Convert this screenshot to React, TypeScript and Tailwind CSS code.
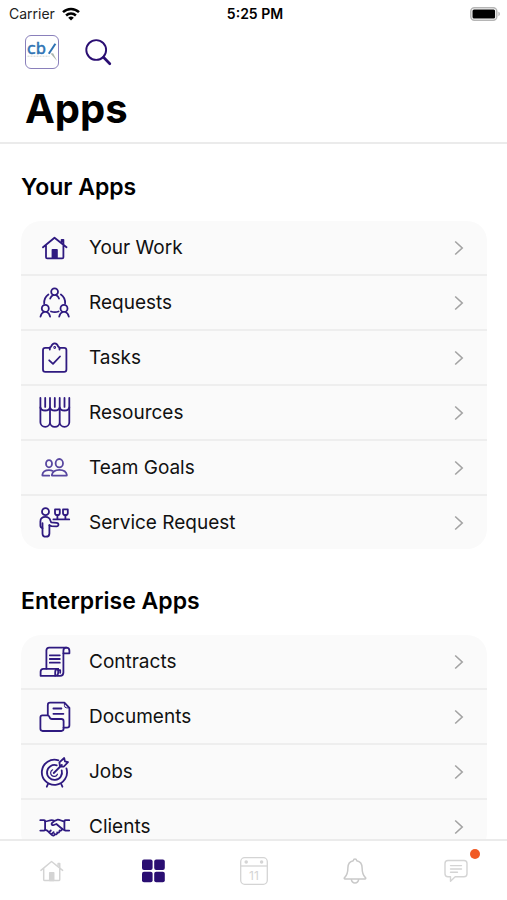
import type { ReactNode } from 'react';

interface AppItem {
  name: string;
  icon: ReactNode;
}

interface IconProps {
  children: ReactNode;
  className?: string;
}

function LineIcon({ children, className = 'text-[#2f1a80]' }: IconProps) {
  return (
    <svg
      viewBox="0 0 32 32"
      className={`w-8 h-8 shrink-0 ${className}`}
      fill="none"
      stroke="currentColor"
      strokeWidth="1.8"
      strokeLinecap="round"
      strokeLinejoin="round"
      aria-hidden="true"
    >
      {children}
    </svg>
  );
}

const HouseShape = () => (
  <>
    <path d="M4 15.3 15.5 5.7l12 9.6M7 13.2v12q0 1.2 1.2 1.2h15q1.2 0 1.2-1.2v-12" />
    <path d="M22.6 10V7.8h1.8v4.5" />
    <path d="M13.5 17.8h4.4v8.4h-4.4z" fill="currentColor" />
  </>
);

const yourApps: AppItem[] = [
  {
    name: 'Your Work',
    icon: (
      <LineIcon>
        <HouseShape />
      </LineIcon>
    ),
  },
  {
    name: 'Requests',
    icon: (
      <LineIcon>
        <circle cx="15.6" cy="4.7" r="3.4" />
        <path d="M11.2 11.6c.6-1.9 1.7-3.1 3-3.5M20 11.6c-.6-1.9-1.7-3.1-3-3.5" />
        <circle cx="6.3" cy="21.4" r="3.5" />
        <path d="M1.5 29.6c.6-2.4 1.8-4 3.5-4.6M11.1 29.6c-.6-2.4-1.8-4-3.5-4.6" />
        <circle cx="25" cy="21.4" r="3.5" />
        <path d="M20.2 29.6c.6-2.4 1.8-4 3.5-4.6M29.8 29.6c-.6-2.4-1.8-4-3.5-4.6" />
        <path d="M9.4 7.4c-3 2.1-4.4 5.3-4.2 9M21.9 7.4c3 2.1 4.4 5.3 4.2 9M12 24.5c2.6.9 5 .9 7.6 0" />
      </LineIcon>
    ),
  },
  {
    name: 'Tasks',
    icon: (
      <LineIcon>
        <path d="M10.8 5.8H6.3Q4 5.8 4 8v19.5q0 2.4 2.3 2.4h18.8q2.3 0 2.3-2.4V8q0-2.2-2.3-2.2h-4.6" />
        <path d="M10.8 7.6V6q0-1.2 1.2-1.2C12.8 2.6 14 1.4 15.7 1.4s2.9 1.2 3.6 3.4q1.2 0 1.2 1.2v1.6" />
        <circle cx="15.7" cy="5.5" r=".5" />
        <path d="m10.2 18.3 3.8 3.5 7-7.3" />
      </LineIcon>
    ),
  },
  {
    name: 'Resources',
    icon: (
      <LineIcon>
        <path d="M1.4.9v24.3a4.8 4.6 0 0 0 9.6 0V.9M11 25.2a4.8 4.6 0 0 0 9.7 0V.9M20.7 25.2a4.8 4.6 0 0 0 9.6 0V.9" />
        <path d="M6.2.9v9M15.8.9v9M25.5.9v9" />
        <path d="M1.4 10.5c.4 2.1 2 3 4.8 3s4.4-.9 4.8-3c.4 2.1 2 3 4.8 3s4.4-.9 4.9-3c.4 2.1 2 3 4.8 3s4.4-.9 4.8-3" />
      </LineIcon>
    ),
  },
  {
    name: 'Team Goals',
    icon: (
      <LineIcon className="text-[#5847a0]">
        <ellipse cx="10" cy="11.7" rx="3" ry="3.6" />
        <ellipse cx="20.3" cy="11.2" rx="3.7" ry="4.2" />
        <path d="M12.8 23.2q0 .5.5.5h14q.6 0 .6-.6c-.5-3.4-3.7-5.3-7.5-5.3s-7 2-7.6 5.4z" />
        <path d="M10.2 23.7H3.9q-.6 0-.6-.6c.4-3.3 3.2-5 6.7-5 1.4 0 2.7.2 3.7.8" />
      </LineIcon>
    ),
  },
  {
    name: 'Service Request',
    icon: (
      <LineIcon>
        <circle cx="6.5" cy="4.7" r="3.5" />
        <path d="M3.5 21.2c-1.6-.4-2.1-1.2-2.1-2.6v-4.2c0-2.8 1.9-4.6 5.1-4.6 2.8 0 4.3 1.5 5 3.9l.6 1.6 5.4.6c2.7.3 2.5 3.5 0 3.4l-5.1-.2-2-.8" />
        <path d="M3.5 16.2v10.2c0 4.4 6.9 4.4 6.9 0v-8.3" />
        <path d="M14.4 12.4h15.8" />
        <path d="M16 2.4h4.8V6q0 2.2-2.4 2.2T16 6zM18.4 8v4M24 2.4h4.8V6q0 2.2-2.4 2.2T24 6zM26.4 8v4" />
      </LineIcon>
    ),
  },
];

const enterpriseApps: AppItem[] = [
  {
    name: 'Contracts',
    icon: (
      <LineIcon>
        <path d="M7.4 22.7V4.5q0-2.8 2.8-2.8h17.1q3.1 0 3.1 3.1v2.5h-6" />
        <path d="M27.3 1.7q-2.9 0-2.9 3v21.8q0 3.3-3.3 3.3H18" />
        <path d="M4.4 22.9h14.8v3.4q.1 3.5-2.9 3.5H1.6v-4q0-2.9 2.8-2.9z" />
        <path d="M19.2 22.9q-3 0-3 3v3.8M19.2 24.2h2v2.6" />
        <path d="M10.8 9.3h10M10.8 13h10M10.8 16.7h10" />
      </LineIcon>
    ),
  },
  {
    name: 'Documents',
    icon: (
      <LineIcon>
        <path d="M8.8 14.2V4q0-2.3 2.3-2.3h14.3l5 5.2v17.4q0 2.4-2.4 2.4h-3.5" />
        <path d="M25.4 1.7v2.8q0 2.4 2.4 2.4h2.5" strokeWidth="1" />
        <path d="M3.4 14.3h4.8q1.7 0 2.2 1.5.6 2.2 2.6 2.2h9.3q2.3 0 2.3 2.3v7.3q0 2.4-2.3 2.4H3.7q-2.3 0-2.3-2.4V16.5q0-2.2 2-2.2z" />
        <path d="M14.4 7.5h8M14.4 12.8h10" />
      </LineIcon>
    ),
  },
  {
    name: 'Jobs',
    icon: (
      <LineIcon>
        <path d="M19.4 4.3a12.6 12.6 0 1 0 8 8" />
        <path d="M17.8 9.3a7.5 7.5 0 1 0 4.9 5" />
        <path d="m14.8 17 8-8M21 10.7l-.6-4.4L25.2 2l.7 3.4 3.1.7-4.1 4.4z" />
        <path d="M13.6 13.8a3.5 3.5 0 1 0 4.8 4.4" strokeWidth="1.2" />
        <path d="m9 28-1.2 2.7M22.2 28l1.2 2.7" />
      </LineIcon>
    ),
  },
  {
    name: 'Clients',
    icon: (
      <LineIcon>
        <path d="M1.3 9.2h3.8q1 0 1 1v8.4q0 1-1 1H1.3M30.2 9.2h-3.8q-1 0-1 1v8.4q0 1 1 1h3.8" />
        <path d="M6.1 10.4c3 .2 4.7-1.9 7.8-1.1l1.6.5M25.4 10.4c-2.8.1-4.6-2.3-7.4-1.6-1.9.4-3.5 1.6-5.1 3.4-1 1.2.4 2.3 1.9 1.8l2.6-1 6.2 5.2c.7.6 1 .7 1.8.6" />
        <path d="M6.1 18.8c2 0 2.8 1.3 4.2 2.8l2.7 2.5c1.4 1.1 2.7.3 2.6-1.1 1.4 1 2.9 0 2.6-1.5 1.5.5 2.7-.5 2.3-2 1.5.3 2.7-.5 2.5-1.8M10 21.3l1.8-1.8M12.7 23.2l2-2" />
      </LineIcon>
    ),
  },
];

function AppSection({ title, items }: { title: string; items: AppItem[] }) {
  return (
    <section>
      <h2 className="text-[23px] leading-7 font-semibold text-black mb-5">{title}</h2>
      <ul className="rounded-[20px] bg-[#fafafa] overflow-hidden divide-y-2 divide-[#eeeeee]">
        {items.map((item) => (
          <li key={item.name}>
            <a href="#" className="flex items-center h-[53px] pl-[18px] pr-[23px]">
              {item.icon}
              <span className="ml-[18px] flex-1 text-[19px] leading-6 text-[#111111]">{item.name}</span>
              <svg viewBox="0 0 10 16" className="w-[10px] h-4" fill="none" stroke="#a3a3a3" strokeWidth="1.6" aria-hidden="true">
                <path d="m1.2 1.5 7 6.5-7 6.5" />
              </svg>
            </a>
          </li>
        ))}
      </ul>
    </section>
  );
}

function StatusBar() {
  return (
    <div className="grid grid-cols-3 items-center h-7 pl-[9px] pr-[6px] text-sm text-[#222222]">
      <div className="flex items-center gap-[7px]">
        <span>Carrier</span>
        <svg viewBox="0 0 18 14" className="w-[18px] h-[14px]" fill="none" stroke="#000" strokeWidth="2.5" aria-hidden="true">
          <path d="M1 5.1a11.6 11.6 0 0 1 16 0M4.1 8.5a7.2 7.2 0 0 1 9.8 0" />
          <path d="M9 13.6 6.2 10.8a4 4 0 0 1 5.6 0z" fill="#000" stroke="none" />
        </svg>
      </div>
      <span className="text-center font-semibold text-black">5:25 PM</span>
      <svg viewBox="0 0 31 14" className="w-[31px] h-[14px] justify-self-end" aria-hidden="true">
        <rect x=".8" y=".8" width="26" height="12.4" rx="3.6" fill="#fff" stroke="#b5b5b5" strokeWidth="1.5" />
        <rect x="2.5" y="2.5" width="22.6" height="9" rx="1.5" fill="#000" />
        <path d="M28.4 4.8c2 .6 2 3.8 0 4.4z" fill="#b5b5b5" />
      </svg>
    </div>
  );
}

function Logo() {
  return (
    <svg viewBox="1 1 32 32" className="w-[34px] h-[34px] rounded-md border border-[#8a80bb]" aria-label="cb" role="img">
      <text x="2" y="18.8" className="font-['DejaVu_Sans',sans-serif] text-[16px]" fill="#2f73b4" stroke="#2f73b4" strokeWidth=".5">
        cb
      </text>
      <path d="m23.8 18.8 6.6-10" stroke="#2f73b4" strokeWidth="2" />
      <path d="M2.5 21.2h22" stroke="#cfd4cf" strokeWidth="1" strokeDasharray="2 1" />
      <path d="m25.5 18.6 2.6-.4 4 7.8z" fill="#a9b3ab" />
    </svg>
  );
}

function TabBar() {
  return (
    <nav className="grid grid-cols-5 h-[61px] shrink-0 border-t-2 border-[#ebebeb] bg-white pl-px text-[#d4d4d4]">
      <a href="#" aria-label="Home" className="flex items-center justify-center">
        <svg viewBox="3 3 26 26" className="w-6 h-6" fill="none" stroke="currentColor" strokeWidth="1.6" strokeLinecap="round" strokeLinejoin="round">
          <HouseShape />
        </svg>
      </a>
      <a href="#" aria-label="Apps" aria-current="page" className="flex items-center justify-center">
        <svg viewBox="0 0 24 24" className="w-6 h-6" fill="#2a0e72">
          <rect x="1" y=".5" width="10.6" height="10.6" rx="2" />
          <rect x="13.2" y=".5" width="10.6" height="10.6" rx="2" />
          <rect x="1" y="12.7" width="10.6" height="10.6" rx="2" />
          <rect x="13.2" y="12.7" width="10.6" height="10.6" rx="2" />
        </svg>
      </a>
      <a href="#" aria-label="Calendar" className="flex items-center justify-center">
        <svg viewBox="0 0 28 28" className="w-7 h-7" fill="none" stroke="currentColor" strokeWidth="1.3">
          <rect x=".7" y=".7" width="26.6" height="26.6" rx="4" />
          <path d="M.7 9h26.6" />
          <circle cx="6.2" cy="5" r="1.1" fill="currentColor" />
          <circle cx="21.6" cy="5" r="1.1" fill="currentColor" />
          <text x="14" y="22.8" textAnchor="middle" fontSize="12" fill="currentColor" stroke="none">
            11
          </text>
        </svg>
      </a>
      <a href="#" aria-label="Notifications" className="flex items-center justify-center">
        <svg viewBox="0 0 24 26" className="w-6 h-[26px]" fill="none" stroke="#c9c9c9" strokeWidth="1.5" strokeLinejoin="round">
          <path d="M12 1c-1 0-1.6.7-1.7 1.7C6.6 3.5 4.9 6.3 4.9 9.8c0 5.4-1.2 7.9-3.3 9.8-.7.7-.4 1.3.5 1.3h19.8c.9 0 1.2-.6.5-1.3-2.1-1.9-3.3-4.4-3.3-9.8 0-3.5-1.7-6.3-5.4-7.1C13.6 1.7 13 1 12 1z" />
          <path d="M8.3 21.2c.3 2.4 1.8 3.8 3.7 3.8s3.4-1.4 3.7-3.8" />
        </svg>
      </a>
      <a href="#" aria-label="Messages" className="relative flex items-center justify-center">
        <svg viewBox="0 0 24 24" className="w-6 h-6" fill="none" stroke="currentColor" strokeWidth="1.4" strokeLinecap="round" strokeLinejoin="round">
          <path d="M4 1.5h16q3 0 3 3v10.2q0 3-3 3h-8.8l-4.7 4.6v-4.6H4q-3 0-3-3V4.5q0-3 3-3z" />
          <path d="M6.5 6.6h11M6.5 10h11M6.5 13.3h7" />
        </svg>
        <span className="absolute top-2 left-1/2 ml-[14px] w-[10px] h-[10px] rounded-full bg-[#f15a24]" />
      </a>
    </nav>
  );
}

export default function App() {
  return (
    <div className="flex flex-col h-screen bg-white font-[Inter,sans-serif]">
      <header className="shrink-0 border-b-2 border-[#ebebeb]">
        <StatusBar />
        <div className="flex items-center gap-[25px] px-[25px] pt-[7px]">
          <Logo />
          <button type="button" aria-label="Search">
            <svg viewBox="0 0 28 28" className="w-7 h-7" fill="none" stroke="#2a0e72" aria-hidden="true">
              <circle cx="12.2" cy="12" r="9.9" strokeWidth="1.9" />
              <path d="m19.5 19.3 6.3 6.4" strokeWidth="2.7" strokeLinecap="round" />
            </svg>
          </button>
        </div>
        <h1 className="px-[25px] pt-4 pb-[9px] text-[40px] leading-12 font-bold text-black">Apps</h1>
      </header>

      <main className="flex-1 min-h-0 overflow-y-auto [scrollbar-width:none] pl-[21px] pr-5 pt-[29px] flex flex-col gap-[38px]">
        <AppSection title="Your Apps" items={yourApps} />
        <AppSection title="Enterprise Apps" items={enterpriseApps} />
      </main>

      <TabBar />
    </div>
  );
}
